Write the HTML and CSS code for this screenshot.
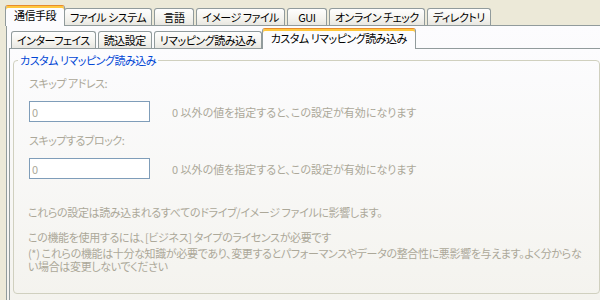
FILE: index.html
```html
<!DOCTYPE html>
<html lang="ja">
<head>
<meta charset="utf-8">
<link rel="stylesheet" href="styles.css">
</head>
<body>
<div class="window">
  <div class="tabstrip">
    <div class="tab active">通信手段</div>
    <div class="tab">ファイル システム</div>
    <div class="tab">言語</div>
    <div class="tab">イメージ ファイル</div>
    <div class="tab">GUI</div>
    <div class="tab">オンライン チェック</div>
    <div class="tab">ディレクトリ</div>
  </div>
  <div class="panel outer-panel">
    <div class="tabstrip inner">
      <div class="tab">インターフェイス</div>
      <div class="tab">読込設定</div>
      <div class="tab">リマッピング読み込み</div>
      <div class="tab active">カスタム リマッピング読み込み</div>
    </div>
    <div class="panel inner-panel">
      <fieldset class="group">
        <legend>カスタム リマッピング読み込み</legend>
        <div class="group-body">
          <div class="label first">スキップ アドレス:</div>
          <div class="field-row">
            <input class="field" type="text" value="0" disabled>
            <span class="hint">0 以外の値を指定すると、この設定が有効になります</span>
          </div>
          <div class="label">スキップするブロック:</div>
          <div class="field-row">
            <input class="field" type="text" value="0" disabled>
            <span class="hint">0 以外の値を指定すると、この設定が有効になります</span>
          </div>
          <div class="note first-note">これらの設定は読み込まれるすべてのドライブ/イメージ ファイルに影響します。</div>
          <div class="note">この機能を使用するには、[ビジネス] タイプのライセンスが必要です</div>
          <div class="note warn">(*) これらの機能は十分な知識が必要であり、変更するとパフォーマンスやデータの整合性に悪影響を与えます。よく分からな<br>い場合は変更しないでください</div>
        </div>
      </fieldset>
    </div>
  </div>
</div>
</body>
</html>
```

FILE: styles.css
```css
* { box-sizing: border-box; }

html, body {
  margin: 0;
  height: 300px;
  overflow: hidden;
}

body {
  background: #ece9d8;
  font-family: "Noto Sans CJK JP", sans-serif;
  font-size: 11px;
  line-height: 14px;
  font-feature-settings: "palt";
  color: #000;
}

.window {
  width: 680px;
  padding: 5px 0 0 6px;
}

.tabstrip {
  display: flex;
  align-items: flex-end;
  height: 20px;
  padding-left: 1px;
}

.tab {
  position: relative;
  height: 17px;
  min-width: 40px;
  padding: 0 5px;
  margin-right: 2px;
  border: 1px solid #919b9c;
  border-bottom: none;
  border-radius: 3px 3px 0 0;
  background: linear-gradient(#fefefe, #f4f3ee 60%, #e8e7e1);
  line-height: 16px;
  letter-spacing: -0.5px;
  text-align: center;
  white-space: nowrap;
}

.tab.active {
  z-index: 1;
  height: 21px;
  margin: 0 -1px -1px -2px;
  padding: 1px 8px 0 8px;
  border-top: 1px solid #e68b2c;
  box-shadow: inset 0 2px 0 #ffc73c;
  background: #fcfcfe;
  line-height: 17px;
}

.panel {
  border: 1px solid #919b9c;
  background: linear-gradient(#fcfcfe, #f4f3ee 270px);
}

.outer-panel {
  height: 300px;
  padding: 2px 0 0 2px;
}

.tabstrip.inner {
  padding-left: 2px;
}

.inner-panel {
  height: 300px;
  padding: 4px 0 0 3px;
  background: linear-gradient(#fcfcfe, #f4f3ee 250px);
}

.group {
  margin: 0;
  padding: 0 0 20px 0;
  width: 587px;
  min-width: 0;
  border: 1px solid #d0d0bf;
  border-radius: 4px;
}

.group legend {
  margin-left: 4px;
  padding: 0 2px;
  color: #0046d5;
  line-height: 14px;
  letter-spacing: -0.5px;
}

.group-body {
  padding-left: 15px;
  color: #aca899;
  letter-spacing: -0.35px;
}

.label {
  margin-top: 11px;
  letter-spacing: -0.5px;
}

.label.first {
  margin-top: 9px;
}

.field-row {
  display: flex;
  align-items: center;
  gap: 22px;
  margin-top: 11px;
}

.field {
  width: 121px;
  height: 21px;
  margin: 0;
  padding: 0 0 0 2px;
  border: 1px solid #7f9db9;
  background: #fff;
  color: #aca899;
  font: inherit;
  line-height: 19px;
}

.hint {
  letter-spacing: 0;
  white-space: nowrap;
}

.note {
  margin-top: 11px;
  margin-left: -1px;
  white-space: nowrap;
}

.note.first-note {
  margin-top: 26px;
}

.note.warn {
  margin-top: 3px;
  line-height: 13px;
}
```
